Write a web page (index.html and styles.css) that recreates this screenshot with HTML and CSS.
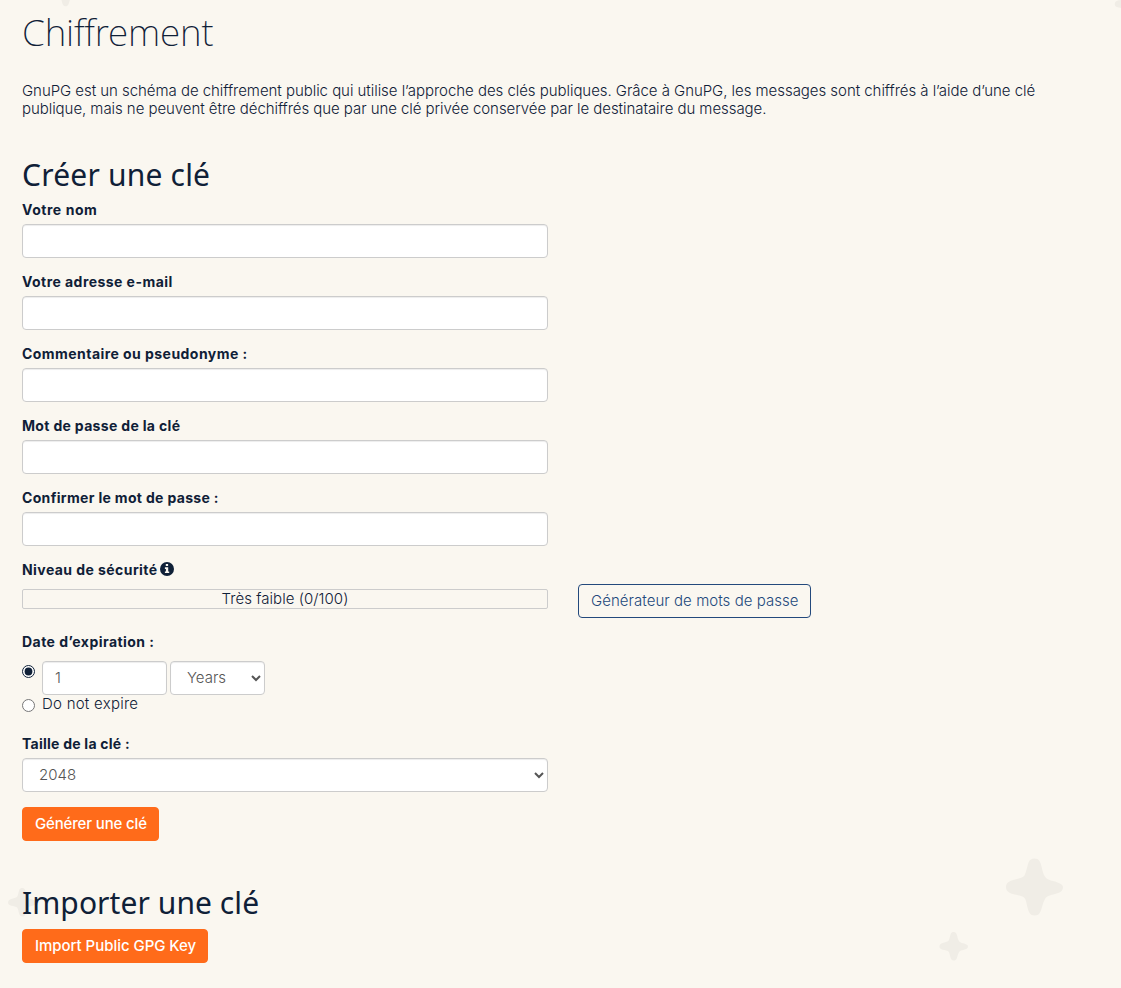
FILE: index.html
```html
<!DOCTYPE html>
<html lang="fr">
<head>
<meta charset="utf-8">
<title>Chiffrement</title>
<link rel="stylesheet" href="styles.css">
</head>
<body>
<svg class="stars" width="1121" height="988" viewBox="0 0 1121 988" aria-hidden="true">
  <defs>
    <path id="star" d="M0-28.5C4.500-28.500 6-25 7-20.500C8.500-14 9.500-9.500 14-7.500C17-6 20-6 23-4.500C26.500-3.200 28.500-2 28.500 0C28.500 4.500 25 6 20.500 7C16 8.200 12.500 8.500 10.500 12C8 16.500 7.500 21 6 24.500C4.500 27.500 3 28.500 0 28.500C-4.500 28.500-5.800 25-7 20.500C-8.500 14.500-8.500 11-12 9.500C-16 7.800-21 7.500-24.500 6C-27.500 4.500-28.500 3-28.500 0C-28.500-4.500-25-6-20.500-7.300C-16-8.500-11.500-9-10-11.500C-8-15.500-7.500-20.500-6-24.500C-4.500-27.500-3-28.500 0-28.500Z"/>
  </defs>
  <use href="#star" transform="translate(1034.500 887)"/>
  <use href="#star" transform="translate(953.700 946.300) scale(.5)"/>
  <use href="#star" transform="translate(22.300 902.300) scale(.5)"/>
  <use href="#star" transform="translate(65.500 -8) scale(.5)"/>
  <use href="#star" transform="translate(1129 4) scale(.5)"/>
</svg>
<main class="page">
  <h1 class="title">Chiffrement</h1>
  <p class="intro"><span class="intro-a">GnuPG est un schéma de chiffrement public qui utilise l’approche des clés publiques. Grâce à GnuPG, les messages sont chiffrés à l’aide d’une clé</span><br><span class="intro-b">publique, mais ne peuvent être déchiffrés que par une clé privée conservée par le destinataire du message.</span></p>

  <h2 class="section">Créer une clé</h2>
  <form class="form">
    <div class="group"><label class="label" for="name">Votre nom</label><input class="control" id="name" type="text"></div>
    <div class="group"><label class="label t1" for="mail">Votre adresse e-mail</label><input class="control" id="mail" type="text"></div>
    <div class="group"><label class="label t1" for="comment">Commentaire ou pseudonyme :</label><input class="control" id="comment" type="text"></div>
    <div class="group"><label class="label t3" for="pass">Mot de passe de la clé</label><input class="control" id="pass" type="password"></div>
    <div class="group"><label class="label t3" for="confirm">Confirmer le mot de passe :</label><input class="control" id="confirm" type="password"></div>
    <div class="strength-row">
      <div class="strength">
        <div class="label t2">Niveau de sécurité<svg class="info" width="14" height="14" viewBox="0 0 14 14"><circle cx="7" cy="7" r="7"/><path class="info-mark" d="M5.800 2h2.300v2.100H5.800zM4.900 5.300h3.300v4.100h1v1.700H4.900V9.400h1V7h-1z"/></svg></div>
        <div class="meter">Très faible (0/100)</div>
      </div>
      <button class="btn btn-outline" type="button">Générateur de mots de passe</button>
    </div>
    <div class="expiry">
      <div class="label t1">Date d’expiration :</div>
      <div class="option">
        <input class="radio" type="radio" name="expire" checked>
        <input class="control amount" type="text" value="1">
        <select class="control unit"><option>Years</option></select>
      </div>
      <label class="option never"><input class="radio" type="radio" name="expire"><span>Do not expire</span></label>
    </div>
    <div class="group"><label class="label t4" for="size">Taille de la clé :</label><select class="control" id="size"><option>2048</option></select></div>
    <button class="btn btn-primary generate" type="button">Générer une clé</button>
  </form>

  <h2 class="section import">Importer une clé</h2>
  <button class="btn btn-primary" type="button">Import Public GPG Key</button>
</main>
</body>
</html>
```
FILE: styles.css
```css
* { box-sizing: border-box; }
html, body { height: 100%; }
body {
  margin: 0;
  overflow: hidden;
  background: #faf7f0;
  color: #0f2037;
  font: 300 15px/18px Inter, sans-serif;
}
.stars { position: absolute; top: 0; left: 0; z-index: -1; fill: #f0ede6; }
.page { padding: 11px 22px 0; }
.title {
  margin: 0 0 29px;
  font: 200 37px/42px "Noto Sans", sans-serif;
  letter-spacing: -.18px;
}
.intro { margin: 0 0 40px; white-space: nowrap; }
.intro-a { letter-spacing: -.045px; }
.intro-b { letter-spacing: -.055px; }
.section {
  margin: 0 0 10px;
  font: 400 30px/33px "Noto Sans", sans-serif;
  letter-spacing: .2px;
}
.section.import { margin: 45px 0 10px; letter-spacing: .07px; }
.form { width: 800px; }
.group { width: 526px; margin-bottom: 15px; }
.label {
  display: block;
  height: 18px;
  margin-bottom: 5px;
  font-size: 14px;
  font-weight: 700;
  letter-spacing: .55px;
  white-space: nowrap;
}
.t1 { letter-spacing: .45px; }
.t2 { letter-spacing: .43px; }
.t3 { letter-spacing: .33px; }
.t4 { letter-spacing: .24px; }
.control {
  display: block;
  width: 100%;
  height: 34px;
  padding: 5px 12px 7px;
  border: 1px solid #ccc;
  border-radius: 4px;
  background-color: #fff;
  box-shadow: inset 0 1px 1px rgba(0, 0, 0, .075);
  color: #555;
  font: inherit;
}
.strength-row { display: flex; gap: 30px; margin-bottom: 15px; }
.strength { width: 526px; }
.info { margin-left: 2.5px; vertical-align: -1px; fill: #0f2037; }
.info-mark { fill: #faf7f0; }
.meter {
  height: 20px;
  margin-top: 10px;
  border: 1px solid #ccc;
  border-radius: 2px;
  text-align: center;
  letter-spacing: .05px;
}
.btn {
  display: block;
  height: 34px;
  padding: 0 12px;
  border: 1px solid #ff6b1a;
  border-radius: 4px;
  font: 500 15px/20px Inter, sans-serif;
  white-space: nowrap;
}
.btn-primary { width: 186px; background: #ff6b1a; color: #fff; letter-spacing: -.04px; }
.generate { width: 137px; letter-spacing: -.15px; }
.btn-outline {
  width: 233px;
  margin-top: 23px;
  border-color: #23497c;
  background: transparent;
  color: #23497c;
  font-weight: 300;
  letter-spacing: .05px;
}
.expiry { margin-bottom: 22px; }
.expiry .label { margin-bottom: 10px; }
.option { display: flex; align-items: flex-start; }
.radio { width: 13px; height: 13px; margin: 4px 7px 0 0; accent-color: #0f2037; }
.amount { width: 125px; margin-right: 3px; }
.unit { width: 95px; }
.never { letter-spacing: .25px; }
```
